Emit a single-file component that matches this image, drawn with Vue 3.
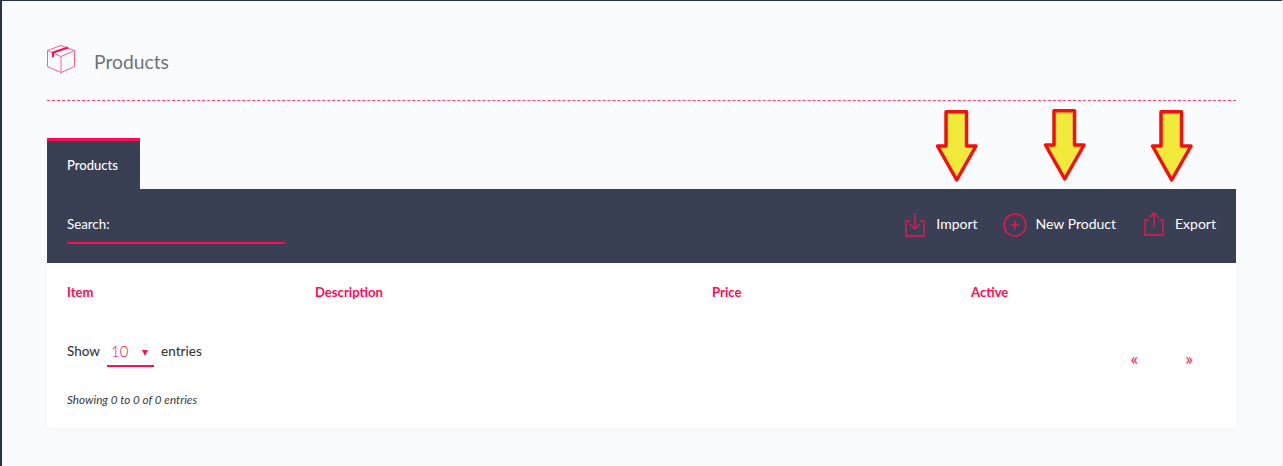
<template>
  <div class="frame">
    <header class="head">
      <svg class="box" width="28" height="28" viewBox="0 0 28 28" fill="none">
        <path d="M14 .5 27.500 5.500v16L14 27.500.5 21.500v-16z" stroke="#ff5c8d" stroke-width="1"/>
        <path d="M.5 5.500 14 11.500l13.500-6M14 11.500v16" stroke="#ff5c8d" stroke-width="1"/>
        <path d="M6 12V7.500L21 2.500" stroke="#ff0a54" stroke-width="2"/>
      </svg>
      <h1>Products</h1>
    </header>
    <div class="tabs"><div class="tab">Products</div></div>
    <div class="bar">
      <div class="search">Search:</div>
      <div class="actions">
        <a class="act imp">
          <svg width="20" height="25" viewBox="0 0 20 25" fill="none" stroke="#f0134f" stroke-width="1.300">
            <path d="M5 9H1v15h18V9h-4M10 1v16M5 12l5 5 5-5"/>
          </svg>
          <span>Import</span>
        </a>
        <a class="act new">
          <svg width="24" height="24" viewBox="0 0 24 24" fill="none" stroke="#f0134f" stroke-width="1.500">
            <circle cx="12" cy="12" r="11"/><path d="M12 7.500v9M7.500 12h9"/>
          </svg>
          <span>New Product</span>
        </a>
        <a class="act exp">
          <svg width="20" height="25" viewBox="0 0 20 25" fill="none" stroke="#f0134f" stroke-width="1.300">
            <path d="M5 8H1v15h18V8h-4M10 16V1M5.500 5.500 10 1l4.500 4.500"/>
          </svg>
          <span>Export</span>
        </a>
      </div>
    </div>
    <section class="card">
      <div class="cols">
        <div class="c1">Item</div><div class="c2">Description</div><div class="c3">Price</div><div>Active</div>
      </div>
      <div class="foot">
        <div>
          <div class="show">
            <span>Show</span>
            <span class="sel"><span>10</span><i></i></span>
            <span>entries</span>
          </div>
          <div class="info">Showing 0 to 0 of 0 entries</div>
        </div>
        <div class="pager"><span>«</span><span>»</span></div>
      </div>
    </section>

    <svg v-for="a in arrows" :key="a.x" class="arrow" :style="{ left: a.x + 'px', top: a.y + 'px' }" width="44" height="76" viewBox="0 0 44 76">
      <path d="M11 2.700h20.500V37h9.500L21.700 71 2.500 37H11z" fill="#f2ea3a" stroke="#f40f0f" stroke-width="3.500" stroke-linejoin="round"/>
    </svg>
  </div>
</template>

<script setup>
const arrows = [
  { x: 933, y: 108 },
  { x: 1041, y: 107 },
  { x: 1148, y: 108 },
]
</script>

<style>
html, body { margin: 0; background: #fafbfd; }
</style>

<style scoped>
.frame {
  position: relative;
  box-sizing: border-box;
  width: 1283px;
  height: 466px;
  overflow: hidden;
  padding: 0 45px;
  background: #fafbfd;
  border-top: 1px solid #2b3246;
  border-left: 2px solid #2b3246;
  border-right: 2px solid #f4f4f6;
  font-family: Lato, "Liberation Sans", sans-serif;
  color: #333;
}
.head {
  box-sizing: border-box;
  height: 100px;
  padding-top: 44px;
  display: flex;
  align-items: flex-start;
  border-bottom: 1px dashed #ff3d78;
  width: 1189px;
}
.box { display: block; }
h1 {
  margin: 4px 0 0 19px;
  font-size: 19.300px;
  line-height: 26px;
  font-weight: 400;
  color: #6e7378;
}
.tabs { padding-top: 37px; width: 1189px; }
.tab {
  box-sizing: border-box;
  width: 93px;
  height: 51px;
  padding-top: 15px;
  padding-left: 20px;
  background: #3a4054;
  border-top: 3px solid #ff0a54;
  color: #fff;
  font-size: 13px;
  font-weight: 500;
  line-height: 18px;
}
.bar {
  box-sizing: border-box;
  width: 1189px;
  height: 74px;
  background: #3a4054;
  display: flex;
  justify-content: space-between;
  align-items: flex-start;
  padding: 0 20px;
  color: #fff;
  font-size: 14px;
}
.search {
  box-sizing: border-box;
  width: 218px;
  height: 55px;
  padding-top: 26px;
  font-size: 13.300px;
  line-height: 18px;
  border-bottom: 2px solid #ff0a54;
}
.actions { display: flex; align-items: center; padding-top: 23px; }
.act { display: flex; align-items: center; }
.act span { line-height: 18px; margin-bottom: 2px; }
.imp svg { margin-right: 11px; }
.new { margin-left: 25px; }
.new svg { margin-right: 9px; }
.exp { margin-left: 28px; }
.exp svg { margin-right: 11px; }
.card {
  box-sizing: border-box;
  width: 1189px;
  height: 165px;
  background: #fff;
  box-shadow: 0 0 6px rgba(40, 50, 80, 0.04);
  padding: 20px 20px 0;
}
.cols {
  display: flex;
  color: #ff0a54;
  font-size: 13.100px;
  font-weight: 700;
  line-height: 18px;
}
.c1 { width: 248px; }
.c2 { width: 397px; }
.c3 { width: 259px; }
.foot {
  display: flex;
  justify-content: space-between;
  margin-top: 41px;
}
.show {
  display: flex;
  align-items: flex-start;
  font-size: 13.500px;
  line-height: 18px;
  font-weight: 500;
  color: #3a3a3a;
}
.sel {
  box-sizing: border-box;
  display: flex;
  justify-content: space-between;
  width: 47px;
  height: 25px;
  margin: 0 7px;
  padding: 0 6px 0 4px;
  border-bottom: 2px solid #ff0a54;
  color: #ff0a54;
  font-size: 15px;
  font-weight: 300;
}
.sel i {
  width: 0;
  height: 0;
  margin-top: 8px;
  border-left: 3.500px solid transparent;
  border-right: 3.500px solid transparent;
  border-top: 6px solid #ff0a54;
}
.info {
  margin-top: 24px;
  font-size: 11.700px;
  font-style: italic;
  line-height: 16px;
  color: #3a3a3a;
}
.pager {
  display: flex;
  gap: 47px;
  padding: 7px 23px 0 0;
  height: 18px;
  color: #ff0a54;
  font-size: 18px;
  font-weight: 400;
  line-height: 18px;
}
.arrow { position: absolute; }
</style>
